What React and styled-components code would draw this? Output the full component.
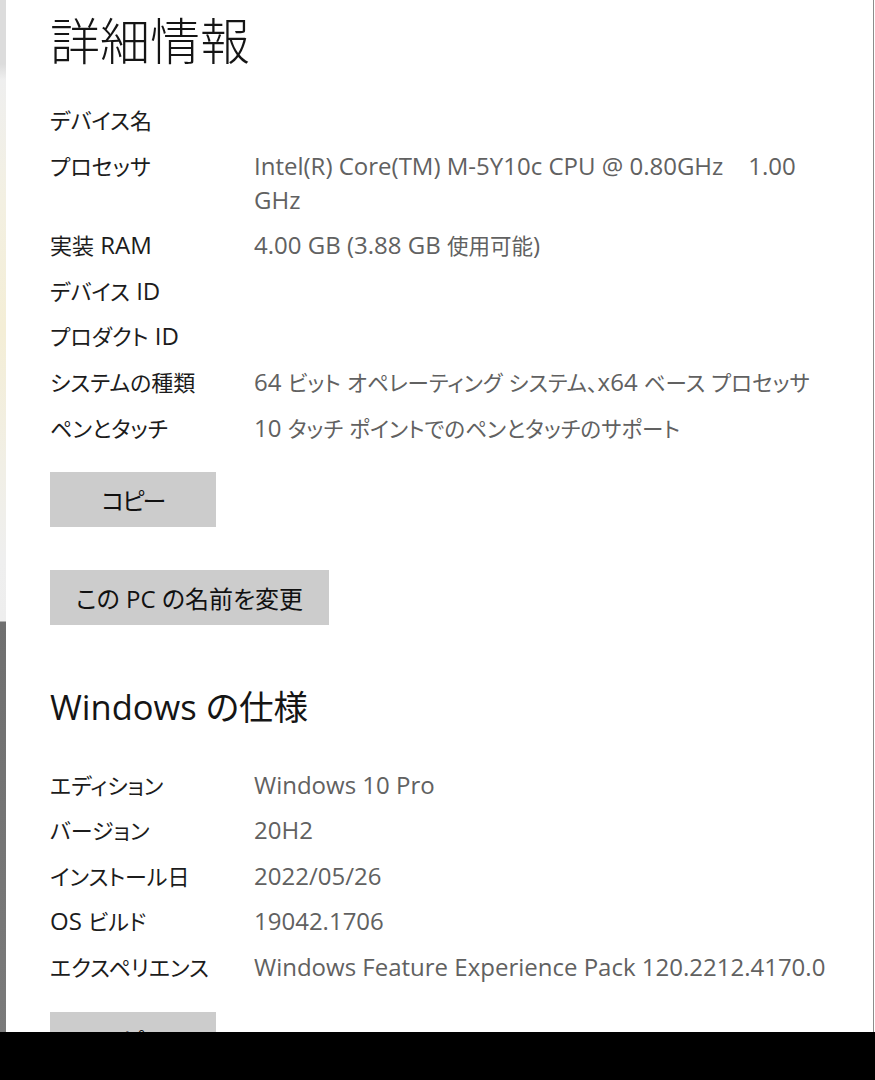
import React from "react";
import styled, { createGlobalStyle } from "styled-components";

const GlobalStyle = createGlobalStyle`
  html, body {
    margin: 0;
    padding: 0;
    background: #000000;
  }
  body {
    font-family: "Open Sans", "Noto Sans CJK JP", sans-serif;
  }
`;

const Page = styled.div`
  width: 875px;
  height: 1080px;
  display: flex;
  flex-direction: column;
  background: #000000;
`;

const Screen = styled.div`
  height: 1032px;
  display: flex;
  overflow: hidden;
  background: #ffffff;
`;

const LeftEdge = styled.div`
  width: 6px;
  flex-shrink: 0;
  background: linear-gradient(
    to bottom,
    #dcdcdc 0px,
    #dcdcdc 64px,
    #efefef 80px,
    #f3f0e2 200px,
    #f4eed6 330px,
    #f1efe6 470px,
    #efefef 560px,
    #eeeeee 621px,
    #6f6f6f 622px,
    #7a7a7a 1032px
  );
`;

const Content = styled.div`
  flex: 1;
  padding-left: 44px;
  border-right: 1px solid #8c8c8c;
  margin-right: 1px;
`;

const Title = styled.h1`
  margin: 8px 0 0;
  font-family: "Noto Sans CJK JP", sans-serif;
  font-size: 50px;
  font-weight: 300;
  line-height: 60px;
  color: #151515;
`;

const InfoList = styled.div`
  margin-top: ${(p) => p.$top}px;
  display: flex;
  flex-direction: column;
  gap: 11.6px;
`;

const Row = styled.div`
  display: grid;
  grid-template-columns: 204px 1fr;
  font-size: 24px;
  line-height: 34px;
  font-feature-settings: "palt";
`;

const Label = styled.div`
  color: #1c1c1c;
  white-space: nowrap;
`;

const Value = styled.div`
  color: #616161;
  white-space: nowrap;
`;

const Line = styled.div`
  height: 34px;
`;

// Japanese runs are set a little smaller than the Latin text around them
const Jp = styled.span`
  font-family: "Noto Sans CJK JP", sans-serif;
  font-size: ${(p) => (p.$tight ? 21.5 : 22)}px;
  line-height: 1;
`;

const GrayButton = styled.button`
  display: block;
  margin-top: ${(p) => p.$top}px;
  width: ${(p) => p.$width}px;
  height: 55px;
  border: none;
  background: #cccccc;
  color: #111111;
  font-family: "Open Sans", "Noto Sans CJK JP", sans-serif;
  font-size: 24px;
  font-feature-settings: "palt";
  letter-spacing: ${(p) => p.$spacing || 0}px;
  padding: 0;
  text-align: center;
`;

const SectionTitle = styled.h2`
  margin: 60px 0 0;
  font-size: 34.5px;
  font-weight: 400;
  line-height: 44px;
  color: #151515;
  font-feature-settings: "palt";
`;

const Footer = styled.div`
  flex: 1;
  background: #000000;
`;

const CJK = /([\u3000-\u30ff\u4e00-\u9fff\uff00-\uffef]+)/;

const mixed = (text, tight) =>
  text
    .split(CJK)
    .filter(Boolean)
    .map((part, i) =>
      CJK.test(part) ? (
        <Jp key={i} $tight={tight}>
          {part}
        </Jp>
      ) : (
        part
      )
    );

const device = [
  ["デバイス名", ""],
  ["プロセッサ", "Intel(R) Core(TM) M-5Y10c CPU @ 0.80GHz\u00a0\u00a0\u00a0\u00a01.00\nGHz"],
  ["実装 RAM", "4.00 GB (3.88 GB 使用可能)"],
  ["デバイス ID", ""],
  ["プロダクト ID", ""],
  ["システムの種類", "64 ビット オペレーティング システム、x64 ベース プロセッサ"],
  ["ペンとタッチ", "10 タッチ ポイントでのペンとタッチのサポート"],
];

const windows = [
  ["エディション", "Windows 10 Pro"],
  ["バージョン", "20H2"],
  ["インストール日", "2022/05/26"],
  ["OS ビルド", "19042.1706"],
  ["エクスペリエンス", "Windows Feature Experience Pack 120.2212.4170.0"],
];

const InfoRows = ({ items, top }) => (
  <InfoList $top={top}>
    {items.map(([label, value]) => (
      <Row key={label}>
        <Label>
          <Line>{mixed(label)}</Line>
        </Label>
        <Value>
          {value.split("\n").map((line, i) => (
            <Line key={i}>{mixed(line, true)}</Line>
          ))}
        </Value>
      </Row>
    ))}
  </InfoList>
);

export default function App() {
  return (
    <Page>
      <GlobalStyle />
      <Screen>
        <LeftEdge />
        <Content>
          <Title>詳細情報</Title>
          <InfoRows items={device} top={35} />
          <GrayButton $top={27} $width={166} $spacing={-2}>
            コピー
          </GrayButton>
          <GrayButton $top={43} $width={279}>
            この PC の名前を変更
          </GrayButton>
          <SectionTitle>Windows の仕様</SectionTitle>
          <InfoRows items={windows} top={39} />
          <GrayButton $top={28} $width={166} $spacing={-2}>
            コピー
          </GrayButton>
        </Content>
      </Screen>
      <Footer />
    </Page>
  );
}
